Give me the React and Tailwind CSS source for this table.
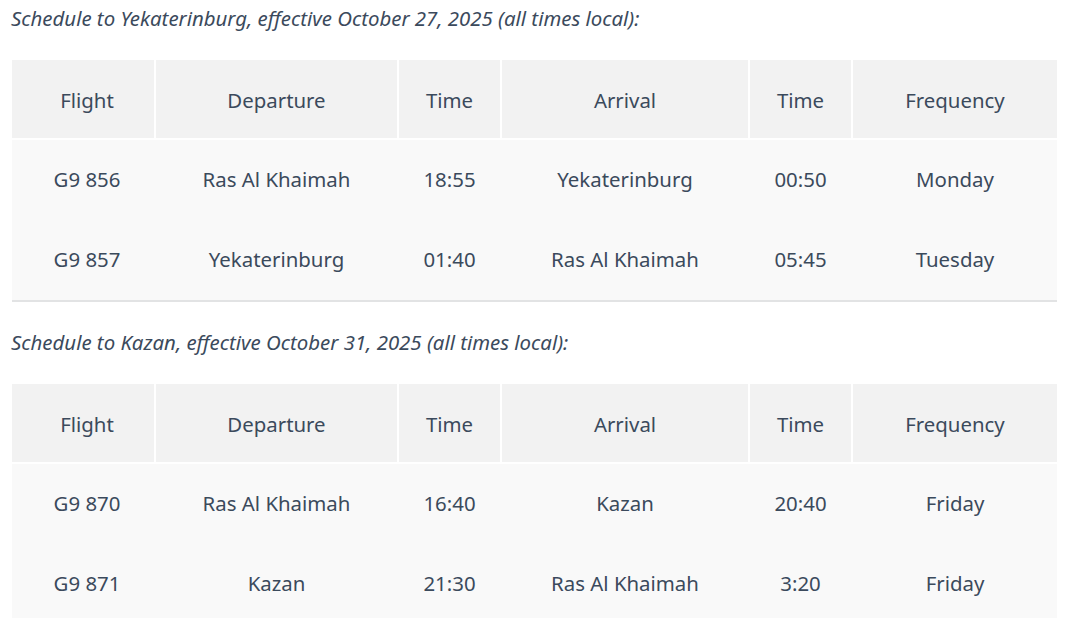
const schedules = [
  {
    title: 'Schedule to Yekaterinburg, effective October 27, 2025 (all times local):',
    rows: [
      ['G9 856', 'Ras Al Khaimah', '18:55', 'Yekaterinburg', '00:50', 'Monday'],
      ['G9 857', 'Yekaterinburg', '01:40', 'Ras Al Khaimah', '05:45', 'Tuesday'],
    ],
  },
  {
    title: 'Schedule to Kazan, effective October 31, 2025 (all times local):',
    rows: [
      ['G9 870', 'Ras Al Khaimah', '16:40', 'Kazan', '20:40', 'Friday'],
      ['G9 871', 'Kazan', '21:30', 'Ras Al Khaimah', '3:20', 'Friday'],
    ],
  },
]

const headers = ['Flight', 'Departure', 'Time', 'Arrival', 'Time', 'Frequency']
const cols = 'grid grid-cols-[142px_241px_101px_246px_101px_204px] gap-x-[2px]'

function ScheduleTable({ title, rows, first }) {
  return (
    <section className={first ? '' : 'mt-[26px]'}>
      <p className="px-[11px] text-[20.4px] leading-[28px] italic text-[#3b4a5c]">{title}</p>
      <div className="mx-[12px] mt-[28px] w-[1045px]">
        <div className={cols}>
          {headers.map((h, i) => (
            <div
              key={i}
              className={`h-[78px] pt-[3px] bg-[#f2f2f2] flex items-center justify-center text-[20.4px] ${i === 0 ? 'pl-[8px]' : ''}`}
            >
              {h}
            </div>
          ))}
        </div>
        <div className="mt-[2px] bg-[#f9f9f9] border-b-2 border-[#e2e3e4]">
          {rows.map((r, ri) => (
            <div key={ri} className={cols}>
              {r.map((c, ci) => (
                <div
                  key={ci}
                  className={`h-[80px] pb-[2px] flex items-center justify-center text-[20.4px] ${ci === 0 ? 'pl-[8px]' : ''}`}
                >
                  {c}
                </div>
              ))}
            </div>
          ))}
        </div>
      </div>
    </section>
  )
}

export default function App() {
  return (
    <div className="min-h-screen bg-white pt-[4px] text-[#3b4a5c] font-['Noto_Sans',sans-serif] overflow-hidden">
      {schedules.map((s, i) => (
        <ScheduleTable key={i} title={s.title} rows={s.rows} first={i === 0} />
      ))}
    </div>
  )
}
